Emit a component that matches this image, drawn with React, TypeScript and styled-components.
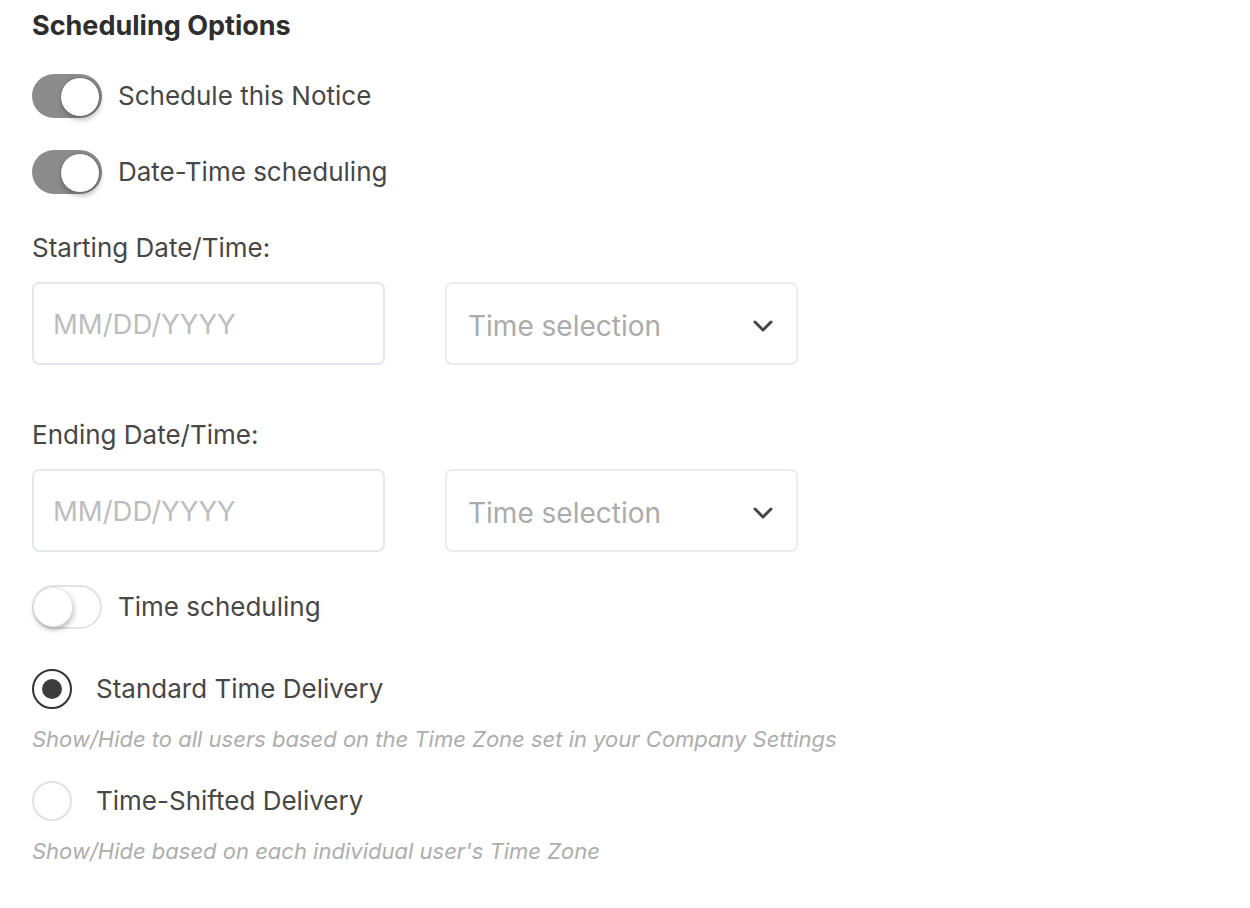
import React from 'react';
import styled, { createGlobalStyle } from 'styled-components';

const GlobalStyle = createGlobalStyle`
  html, body {
    margin: 0;
    padding: 0;
    background: #ffffff;
    font-family: Inter, 'Noto Sans', 'Liberation Sans', sans-serif;
  }
`;

const Page = styled.div`
  padding: 10px 32px 40px;
  display: flex;
  flex-direction: column;
  color: #474747;
`;

const Title = styled.h2`
  margin: 0;
  font-size: 27px;
  line-height: 32px;
  font-weight: 700;
  color: #2e2e2e;
`;

const Row = styled.div<{ $top: number; $gap?: number }>`
  display: flex;
  align-items: center;
  gap: ${({ $gap }) => $gap ?? 16}px;
  margin-top: ${({ $top }) => $top}px;
`;

const Track = styled.div<{ $on: boolean }>`
  position: relative;
  width: 70px;
  height: 44px;
  box-sizing: border-box;
  border-radius: 22px;
  background: ${({ $on }) => ($on ? '#8c8c8c' : '#ffffff')};
  border: ${({ $on }) => ($on ? 'none' : '2px solid #e2e2e2')};
  flex-shrink: 0;
`;

const Knob = styled.div<{ $on: boolean }>`
  position: absolute;
  top: ${({ $on }) => ($on ? 3 : 0)}px;
  left: ${({ $on }) => ($on ? 28 : -1)}px;
  width: 40px;
  height: 40px;
  box-sizing: border-box;
  border-radius: 50%;
  background: #ffffff;
  border: ${({ $on }) => ($on ? '1px solid #6e6e6e' : '1px solid #e6e6e6')};
  box-shadow: 1px 3px 5px rgba(0, 0, 0, 0.25);
`;

const Label = styled.span`
  font-size: 26px;
  line-height: 32px;
  color: #474747;
`;

const FieldLabel = styled.div<{ $top: number }>`
  margin-top: ${({ $top }) => $top}px;
  font-size: 26px;
  line-height: 32px;
  color: #474747;
`;

const Fields = styled.div`
  display: flex;
  gap: 60px;
  margin-top: 18px;
`;

const DateInput = styled.input`
  width: 353px;
  height: 83px;
  box-sizing: border-box;
  border: 2px solid #e4e7eb;
  border-radius: 7px;
  padding: 0 19px;
  font-family: inherit;
  font-size: 27.5px;
  color: #474747;
  outline: none;
  &::placeholder {
    color: #bdbdbd;
  }
`;

const Select = styled.div`
  width: 353px;
  height: 83px;
  box-sizing: border-box;
  border: 2px solid #ececec;
  border-radius: 7px;
  padding: 4px 22px 0 21px;
  display: flex;
  align-items: center;
  justify-content: space-between;
  font-size: 28px;
  color: #ababab;
`;

const RadioCircle = styled.div<{ $checked: boolean }>`
  width: 40px;
  height: 40px;
  box-sizing: border-box;
  border-radius: 50%;
  border: 2px solid ${({ $checked }) => ($checked ? '#333333' : '#e2e2e2')};
  display: flex;
  align-items: center;
  justify-content: center;
  flex-shrink: 0;
  &::after {
    content: '';
    display: ${({ $checked }) => ($checked ? 'block' : 'none')};
    width: 20px;
    height: 20px;
    border-radius: 50%;
    background: #3d3d3d;
  }
`;

const Helper = styled.div`
  margin-top: 16px;
  font-size: 22px;
  line-height: 28px;
  font-style: italic;
  color: #adadad;
`;

const Toggle: React.FC<{ on: boolean; label: string; top: number }> = ({ on, label, top }) => (
  <Row $top={top}>
    <Track $on={on}>
      <Knob $on={on} />
    </Track>
    <Label>{label}</Label>
  </Row>
);

const Radio: React.FC<{ checked: boolean; label: string; top: number }> = ({ checked, label, top }) => (
  <Row $top={top} $gap={24}>
    <RadioCircle $checked={checked} />
    <Label>{label}</Label>
  </Row>
);

const Chevron = () => (
  <svg width="22" height="14" viewBox="0 0 22 14" fill="none">
    <path d="M3 3l8 8 8-8" stroke="#454545" strokeWidth="3" strokeLinecap="round" strokeLinejoin="round" />
  </svg>
);

const DateTimeFields = () => (
  <Fields>
    <DateInput placeholder="MM/DD/YYYY" />
    <Select>
      <span>Time selection</span>
      <Chevron />
    </Select>
  </Fields>
);

const App: React.FC = () => {
  return (
    <>
      <GlobalStyle />
      <Page>
        <Title>Scheduling Options</Title>
        <Toggle on label="Schedule this Notice" top={32} />
        <Toggle on label="Date-Time scheduling" top={32} />
        <FieldLabel $top={38}>Starting Date/Time:</FieldLabel>
        <DateTimeFields />
        <FieldLabel $top={54}>Ending Date/Time:</FieldLabel>
        <DateTimeFields />
        <Toggle on={false} label="Time scheduling" top={33} />
        <Radio checked label="Standard Time Delivery" top={40} />
        <Helper>Show/Hide to all users based on the Time Zone set in your Company Settings</Helper>
        <Radio checked={false} label="Time-Shifted Delivery" top={28} />
        <Helper>Show/Hide based on each individual user's Time Zone</Helper>
      </Page>
    </>
  );
};

export default App;
